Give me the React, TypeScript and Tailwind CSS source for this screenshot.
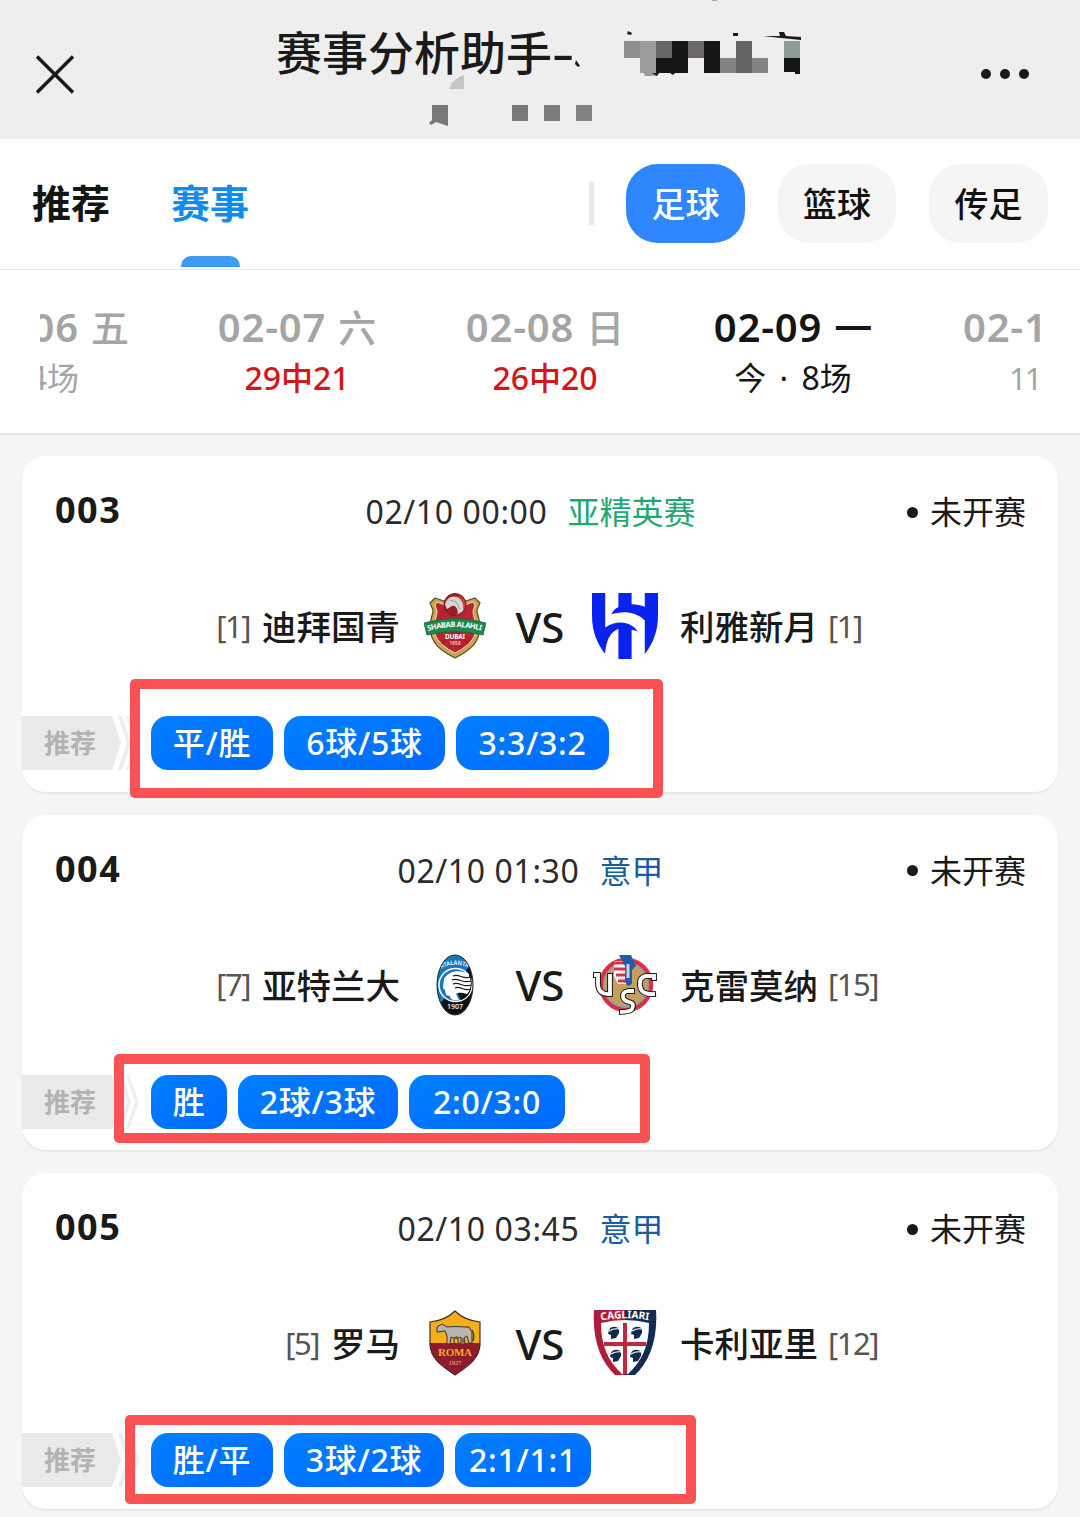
import type { ReactNode } from 'react';

type Chip = { text: string; width: string };

type Match = {
  no: string;
  time: string;
  league: string;
  leagueColor: string;
  home: string;
  homeRank: string;
  homeLogo: ReactNode;
  away: string;
  awayRank: string;
  awayLogo: ReactNode;
  chips: Chip[];
  frame: string;
};

function ShababLogo() {
  return (
    <svg width="62" height="66" viewBox="0 0 62 66">
      <path
        d="M11 5 L20 8 H42 L51 5 L56 10 L53 17 C53 22 56 26 56 34 C56 50 45 58 31 65 C17 58 6 50 6 34 C6 26 9 22 9 17 L6 10 Z"
        fill="#c9a452"
        stroke="#5b4a2a"
        strokeWidth="1.2"
      />
      <path
        d="M13 9 L21 12 H41 L49 9 L51 12 L49 18 C49 24 52 28 52 35 C52 47 42 54 31 60 C20 54 10 47 10 35 C10 28 13 24 13 18 L11 12 Z"
        fill="#b8232f"
        stroke="#f3e3b4"
        strokeWidth="1"
      />
      <path d="M31 35 L18 51 M31 35 L25 56 M31 35 L37 56 M31 35 L44 51" stroke="#9d1c27" strokeWidth="1.500" />
      <circle cx="31" cy="11.500" r="11" fill="#9c2029" stroke="#7c1a20" strokeWidth="1" />
      <path d="M34 2 Q43 6 41 15 Q38 21 32 22 L36 14 Z" fill="#cf4038" />
      <path d="M21 12 C22 5 28 2 33 4 C38 6 40 12 39 18 L34 21 C34 15 31 12 28 13 L23 16 Z" fill="#d8d4d3" />
      <path d="M26 7 L32 9 L36 16" stroke="#a39b9a" fill="none" />
      <path d="M0 30 Q31 21 62 30 L59 42 Q31 35 3 42 Z" fill="#1c8a4b" stroke="#14683a" strokeWidth=".8" />
      <path id="shababArc" d="M4 38 Q31 30 59 38" fill="none" />
      <text fontSize="7.500" fontWeight="700" fill="#fff" textLength="54">
        <textPath href="#shababArc">SHABAB ALAHLI</textPath>
      </text>
      <text x="31" y="45.500" fontSize="6.500" textLength="20" textAnchor="middle" fontWeight="700" fill="#fff">DUBAI</text>
      <text x="31" y="52" fontSize="4.500" textLength="11" textAnchor="middle" fontWeight="700" fill="#f2cf9a">1958</text>
    </svg>
  );
}

function HilalLogo() {
  return (
    <svg width="66" height="66" viewBox="0 0 65 65" fill="#0a22f0">
      <path d="M0 0 H13 V34 C18 30.500 23 29 28 29 C36 29 42 33 45 38 C40 36 35 35 30 35 C21 35 14 43 13 60 C5 50 0 38 0 22 Z" />
      <path d="M26 0 H39 V11 C44 11 48 12 52 13.500 V0 H65 V22 C65 38 60 50 52 60 V27 C46 21 38 19 32 19 C27 19 23 20 19 21 C21 17 23 15 26 14 Z" />
      <path d="M26 34 H39 V65 H26 Z" />
    </svg>
  );
}

function AtalantaLogo() {
  return (
    <svg width="38" height="62" viewBox="0 0 38 62">
      <defs>
        <clipPath id="atalanta">
          <ellipse cx="19" cy="31" rx="18" ry="30" />
        </clipPath>
      </defs>
      <g clipPath="url(#atalanta)">
        <rect width="38" height="62" fill="#111114" />
        <path d="M0 0 H38 L32 14 L4 50 L0 50 Z" fill="#1878bd" />
      </g>
      <circle cx="19.500" cy="31" r="16.500" fill="#1878bd" stroke="#fff" strokeWidth="1.500" />
      <path d="M34 20 C38 30 35 43 25 46 L21 38 Z" fill="#111114" />
      <path d="M8 25 C12 17 24 15 32 20 L34 24 C36 31 34 37 31 40 C26 39 23 38 20 40 L23 46 C17 47 14 45 14 42 L10 41 L9 36 L7 34 Z" fill="#fff" />
      <path
        d="M17 22 C23 19 27 26 34 23 M16 26 C22 23 27 30 35 27 M17 30 C23 27 27 34 35 31 M19 34 C24 31 28 38 34 35"
        stroke="#15181e"
        strokeWidth="1.100"
        fill="none"
      />
      <path id="atalantaArc" d="M5 14.500 Q19 7 34 14.500" fill="none" />
      <text fontSize="6" fontWeight="600" fill="#fff" textLength="28" lengthAdjust="spacingAndGlyphs">
        <textPath href="#atalantaArc">ATALANTA</textPath>
      </text>
      <text x="19" y="55" fontSize="7" fontWeight="500" textAnchor="middle" textLength="16" fill="#fff">1907</text>
      <ellipse cx="19" cy="31" rx="18" ry="30" fill="none" stroke="#262b33" />
    </svg>
  );
}

function CremoneseLogo() {
  return (
    <svg width="64" height="62" viewBox="0 0 64 62" fill="none">
      <circle cx="33" cy="31" r="25" fill="#c3a05c" stroke="#dc2f43" strokeWidth="4.500" />
      <circle cx="33" cy="31" r="22" stroke="#9c9ba0" strokeWidth="2" />
      <path d="M21 7 H35 V30 H25 L21 22 Z" fill="#fff" />
      <path d="M21 9 H35 M21 15 H35 M23 21 H35 M25 27 H35" stroke="#dc2f43" strokeWidth="3" />
      <path d="M26 1 H38 L43 12 L39 16 V30 L35 32 L32 28 V12 Z" fill="#225baa" />
      <path d="M35 10 V24" stroke="#cbd3df" strokeWidth="3" />
      <g stroke="#1a1a1a" strokeWidth="5.800">
        <path d="M0 21 H5 V31 Q6 41 17 40 V19" />
        <path d="M61 27 V22 H53 Q46 23 47 32 Q48 41 63 40" />
        <path d="M42 37 H35 Q29 38 30 43 Q31 47 36 48 Q42 49 39 55 Q37 58 26 58" />
      </g>
      <g stroke="#fff" strokeWidth="3.800">
        <path d="M1 21 H5 V31 Q6 41 17 40 V20" />
        <path d="M61 26 V22 H53 Q46 23 47 32 Q48 41 62 40" />
        <path d="M41 37 H35 Q29 38 30 43 Q31 47 36 48 Q42 49 39 55 Q37 58 27 58" />
      </g>
    </svg>
  );
}

function RomaLogo() {
  return (
    <svg width="52" height="66" viewBox="0 0 52 66">
      <defs>
        <clipPath id="roma">
          <path d="M26 1 C20 7 10 11 1 12 V35 C2 50 15 57 26 65 C37 57 50 50 51 35 V12 C42 11 32 7 26 1 Z" />
        </clipPath>
      </defs>
      <g clipPath="url(#roma)">
        <rect width="52" height="66" fill="#8f1b2c" />
        <rect width="52" height="33" fill="#f5ad1b" />
      </g>
      <path
        d="M8 17 L13 14 L18 17 C25 16 32 17 40 17 L43 22 V33 H40 L38 26 L35 28 L36 34 H32 V27 C28 29 24 28 22 27 L21 34 H18 V26 L16 21 L8 22 Z"
        fill="#b8b5b0"
        stroke="#363230"
        strokeWidth="1"
      />
      <path d="M25 33 V28 L28 27 L30 34 M34 33 V28" stroke="#5b5754" strokeWidth="1.500" fill="none" />
      <path d="M43 20 Q46 25 44 31" stroke="#363230" strokeWidth="1.200" fill="none" />
      <text x="26" y="45.500" fontSize="11" fontFamily="Liberation Serif, serif" textAnchor="middle" textLength="34" fill="#f5ad1b" fontWeight="700">ROMA</text>
      <text x="26" y="55" fontSize="6.500" fontFamily="Liberation Serif, serif" textAnchor="middle" textLength="13" fill="#e8c9a9">1927</text>
      <path d="M26 1 C20 7 10 11 1 12 V35 C2 50 15 57 26 65 C37 57 50 50 51 35 V12 C42 11 32 7 26 1 Z" fill="none" stroke="#4a2a20" strokeWidth="1.200" />
    </svg>
  );
}

function Moor({ x, y }: { x: number; y: number }) {
  return (
    <g transform={`translate(${x} ${y})`}>
      <path d="M1 4 Q3 0 8 1 Q12 2 11 7 L8 12 L3 13 L3 9 L0 8 Z" fill="#142a4c" />
      <path d="M1 5 Q6 2 11 3" stroke="#fff" strokeWidth="1.200" fill="none" />
    </g>
  );
}

function CagliariLogo() {
  return (
    <svg width="64" height="66" viewBox="0 0 64 66">
      <path d="M1 0 H32 V65 H22 C8 52 -1 30 1 0 Z" fill="#b01d38" />
      <path d="M63 0 H32 V65 H42 C56 52 65 30 63 0 Z" fill="#132c50" />
      <path d="M8 13 Q32 7 56 13 C56 36 49 51 35 64 H29 C15 51 8 36 8 13 Z" fill="#fff" />
      <path d="M32 13 V64 M11 34 H53" stroke="#c02840" strokeWidth="4" />
      <Moor x={15} y={16} />
      <Moor x={38} y={16} />
      <Moor x={17} y={39} />
      <Moor x={37} y={39} />
      <path id="cagliariArc" d="M8 10.500 Q32 6 57 10.500" fill="none" />
      <text fontSize="10.500" fontWeight="700" fill="#fff" textLength="48" lengthAdjust="spacingAndGlyphs">
        <textPath href="#cagliariArc">CAGLIARI</textPath>
      </text>
    </svg>
  );
}

const MATCHES: Match[] = [
  {
    no: '003',
    time: '02/10 00:00',
    league: '亚精英赛',
    leagueColor: 'text-[#1fa873]',
    home: '迪拜国青',
    homeRank: '[1]',
    homeLogo: <ShababLogo />,
    away: '利雅新月',
    awayRank: '[1]',
    awayLogo: <HilalLogo />,
    chips: [
      { text: '平/胜', width: 'w-[122px]' },
      { text: '6球/5球', width: 'w-[161px]' },
      { text: '3:3/3:2', width: 'w-[153px]' },
    ],
    frame: 'left-[108px] top-[223px] w-[533px] h-[119px]',
  },
  {
    no: '004',
    time: '02/10 01:30',
    league: '意甲',
    leagueColor: 'text-[#1d5c9b]',
    home: '亚特兰大',
    homeRank: '[7]',
    homeLogo: <AtalantaLogo />,
    away: '克雷莫纳',
    awayRank: '[15]',
    awayLogo: <CremoneseLogo />,
    chips: [
      { text: '胜', width: 'w-[76px]' },
      { text: '2球/3球', width: 'w-[160px]' },
      { text: '2:0/3:0', width: 'w-[156px]' },
    ],
    frame: 'left-[92px] top-[239.5px] w-[536px] h-[89px]',
  },
  {
    no: '005',
    time: '02/10 03:45',
    league: '意甲',
    leagueColor: 'text-[#1d5c9b]',
    home: '罗马',
    homeRank: '[5]',
    homeLogo: <RomaLogo />,
    away: '卡利亚里',
    awayRank: '[12]',
    awayLogo: <CagliariLogo />,
    chips: [
      { text: '胜/平', width: 'w-[122px]' },
      { text: '3球/2球', width: 'w-[160px]' },
      { text: '2:1/1:1', width: 'w-[136px]' },
    ],
    frame: 'left-[103px] top-[242px] w-[571px] h-[89px]',
  },
];

const DAYS = [
  { date: '02-07', week: '六', sub: '29中21', color: 'text-[#a5a5a5]', subColor: 'text-[#d4161b] font-medium' },
  { date: '02-08', week: '日', sub: '26中20', color: 'text-[#a5a5a5]', subColor: 'text-[#d4161b] font-medium' },
  { date: '02-09', week: '一', sub: '今 · 8场', color: 'text-[#151515]', subColor: 'text-[#151515] [word-spacing:5px]' },
];

// Title with the account name pixelated out
function TitleMosaic() {
  return (
    <svg className="absolute left-0 top-0" width="1080" height="139" viewBox="0 0 1080 139">
      <path d="M576 60 L580 66 L578 67 L575 64 Z" fill="#1a1a1a" />
      <path d="M628 31 L632 33 L631 35 L627 34 Z M733 33 h5 v3 h-5 Z M779 32 h5 l2 4 l15 1 v3 l-20 -2 l-18 -2 l17 0 Z" fill="#1a1a1a" />
      <path d="M624 44h16v14h-16z" fill="#8e8e8e" />
      <path d="M640 44h16v32h-11l-5-10z" fill="#999c9a" />
      <path d="M624 41h16v17h-16z" fill="#8e8e8e" />
      <path d="M640 41h16v32h-16z" fill="#999c9a" />
      <path d="M656 41h16v17h-16z" fill="#666" />
      <path d="M672 41h16v32h-32v-15h16z" fill="#161616" />
      <path d="M688 41h16v17h-16z" fill="#6b6668" />
      <path d="M704 41h16v32h-16z" fill="#161616" />
      <path d="M720 58h16v15h-16z" fill="#828282" />
      <path d="M736 41h16v32h-16z" fill="#646464" />
      <path d="M752 58h16v15h-16z" fill="#828282" />
      <path d="M784 41h16v17h-16z" fill="#909a97" />
      <path d="M784 58h16v16h-5v-2h-11z" fill="#161616" />
      <path d="M652 73h7l-2 3z M670 73h5l-2 2z" fill="#1a1a1a" />
      <path d="M449 89 Q453 78 464 75 V89 Z" fill="#c6c6c6" />
      <path d="M432 105h16v21l-12-4-5 3-2-2 3-3z" fill="#777" />
      <path d="M512 105h16v16h-16z" fill="#777" />
      <path d="M544 105h16v16h-16z" fill="#7c7c7c" />
      <path d="M576 105h16v16h-16z" fill="#828282" />
      <path d="M712 0h5v1h-5z" fill="#aaa" />
    </svg>
  );
}

function Header() {
  return (
    <header className="relative flex h-[139px] bg-[#eee] pl-9">
      <TitleMosaic />
      <svg className="mt-[55px]" width="38" height="39" viewBox="0 0 38 39" stroke="#1a1a1a" strokeWidth="3.500">
        <path d="M1 1.500 L37 37.500 M37 1.500 L1 37.500" />
      </svg>
      <h1 className="ml-[202px] mt-[19px] flex text-[46px] leading-[66px] font-medium whitespace-nowrap text-[#1a1a1a]">
        赛事分析助手
        <span className="origin-left scale-x-150">-</span>
      </h1>
      <svg className="ml-auto mr-[50px] mt-[68px]" width="50" height="12" fill="#1a1a1a">
        <circle cx="6" cy="6" r="5" />
        <circle cx="25" cy="6" r="5" />
        <circle cx="44" cy="6" r="5" />
      </svg>
    </header>
  );
}

function Nav() {
  return (
    <nav className="flex h-[131px] items-center border-b border-[#e8e8e8] bg-white px-8">
      <div className="flex h-full gap-[61px] text-[39px] leading-[128px] font-bold">
        <span className="text-[#151515]">推荐</span>
        <span className="relative text-[#118cec]">
          赛事
          <i className="absolute bottom-[2px] left-[10px] h-[11px] w-[59px] rounded-t-[10px] bg-[#3d9af5]" />
        </span>
      </div>
      <div className="-mt-px ml-auto flex items-center text-[34px] font-medium text-[#111]">
        <i className="mr-8 h-[43px] w-[5px] bg-[#e9e9e9]" />
        <span className="flex h-[79px] w-[119px] items-center justify-center rounded-[32px] bg-[#3086ff] pt-[2px] text-white">足球</span>
        <span className="ml-[33px] flex h-[79px] w-[118px] items-center justify-center rounded-[32px] bg-[#f5f5f5] pt-[2px]">篮球</span>
        <span className="ml-[33px] flex h-[79px] w-[119px] items-center justify-center rounded-[32px] bg-[#f5f5f5] pt-[2px]">传足</span>
      </div>
    </nav>
  );
}

function Day({ date, week }: { date: string; week: string }) {
  return (
    <div className="flex gap-3 text-[40px] leading-[50px] font-semibold">
      <span className="tracking-[0.8px]">{date}</span>
      <span className="text-[38px] font-medium">{week}</span>
    </div>
  );
}

function DateBar() {
  return (
    <div className="h-[165px] border-b-2 border-[#e4e4e4] bg-white px-10 pt-[32px]">
      <div className="flex overflow-x-clip whitespace-nowrap">
        <div className="flex w-[133px] shrink-0 flex-col items-end pr-[44px] text-[#a5a5a5]">
          <Day date="02-06" week="五" />
          <span className="mr-[50px] text-[32px] leading-[52px]">24场</span>
        </div>
        {DAYS.map((d) => (
          <div key={d.date} className={`flex w-[248px] shrink-0 flex-col items-center ${d.color}`}>
            <Day date={d.date} week={d.week} />
            <span className={`text-[32px] leading-[52px] ${d.subColor}`}>{d.sub}</span>
          </div>
        ))}
        <div className="flex w-[248px] shrink-0 flex-col pl-[46px] text-[#a5a5a5]">
          <Day date="02-10" week="二" />
          <span className="pl-[46px] text-[31px] leading-[52px] tracking-[-2px]">11场</span>
        </div>
      </div>
    </div>
  );
}

function Ribbon() {
  return (
    <div className="relative h-[54px] w-[129px] shrink-0">
      <svg width="118" height="54" viewBox="0 0 118 54">
        <path d="M0 0 H90 L99 27 L90 54 H0 Z" fill="#eaeaea" />
        <path d="M96 0 H100 L109 27 L100 54 H96 L105 27 Z" fill="#ededed" />
        <path d="M104 0 H107 L117 27 L107 54 H104 L113 27 Z" fill="#efefef" />
      </svg>
      <span className="absolute left-[22px] top-0 text-[26px] leading-[54px] font-bold text-[#b3b3b3]">推荐</span>
    </div>
  );
}

function MatchCard({ m }: { m: Match }) {
  return (
    <section className="relative h-[335.5px] rounded-[24px] bg-white shadow-[0_2px_2px_rgba(0,0,0,0.06)]">
      <div className="grid h-[112px] grid-cols-[200px_1fr_220px] items-center pr-8 pl-[33px]">
        <b className="-mt-1 text-[36px] font-bold tracking-[1.5px] text-[#1a1a1a]">{m.no}</b>
        <div className="flex items-center justify-center gap-5 text-[32px] text-[#2b2b2b]">
          <span className="tracking-[0.6px]">{m.time}</span>
          <span className={m.leagueColor}>{m.league}</span>
        </div>
        <div className="flex items-center justify-end gap-3 text-[32px] text-[#1a1a1a]">
          <i className="size-[11px] rounded-full bg-[#1a1a1a]" />
          未开赛
        </div>
      </div>
      <div className="grid h-[116px] grid-cols-[378px_110px_60px_110px_1fr] items-center text-[34.5px]">
        <div className="flex items-center justify-end gap-[12px]">
          <span className="text-[31px] tracking-[-1.5px] text-[#555]">{m.homeRank}</span>
          <span className="pt-[2px] font-medium text-[#1a1a1a]">{m.home}</span>
        </div>
        <div className="flex justify-center">{m.homeLogo}</div>
        <div className="text-center text-[42px] font-medium text-[#1a1a1a]">VS</div>
        <div className="flex justify-center">{m.awayLogo}</div>
        <div className="flex items-center gap-[10px]">
          <span className="pt-[2px] font-medium text-[#1a1a1a]">{m.away}</span>
          <span className="text-[31px] tracking-[-1.5px] text-[#555]">{m.awayRank}</span>
        </div>
      </div>
      <div className="mt-8 flex">
        <Ribbon />
        <div className="flex gap-[11px]">
          {m.chips.map((c) => (
            <span
              key={c.text}
              className={`flex h-[54px] items-center justify-center rounded-[17px] bg-linear-to-br from-[#0080ff] to-[#0068ff] text-[32px] font-medium tracking-[0.7px] whitespace-nowrap text-white ${c.width}`}
            >
              {c.text}
            </span>
          ))}
        </div>
      </div>
      <div className={`absolute rounded-[5px] border-[10px] border-[#fa5252] ${m.frame}`} />
    </section>
  );
}

export default function App() {
  return (
    <div className="h-[1517px] w-[1080px] overflow-hidden bg-[#f5f5f5] font-['Noto_Sans','Noto_Sans_CJK_SC',sans-serif]">
      <Header />
      <Nav />
      <DateBar />
      <main className="flex flex-col gap-[23px] px-[22px] pt-[21px]">
        {MATCHES.map((m) => (
          <MatchCard key={m.no} m={m} />
        ))}
      </main>
    </div>
  );
}
